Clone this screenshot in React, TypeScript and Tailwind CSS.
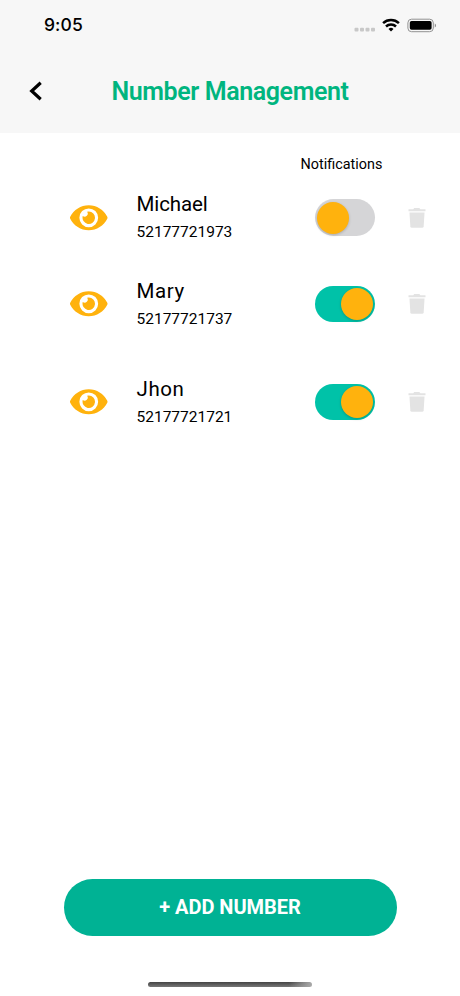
import { useState } from "react";
import { FaEye } from "react-icons/fa";

interface PhoneEntry {
    name: string;
    number: string;
    enabled: boolean;
    spacing: string;
    nameStyle: string;
}

const initialEntries: PhoneEntry[] = [
    { name: "Michael", number: "52177721973", enabled: false, spacing: "mt-[12.5px]", nameStyle: "tracking-[-0.1px]" },
    { name: "Mary", number: "52177721737", enabled: true, spacing: "mt-[26.5px]", nameStyle: "tracking-[0.6px]" },
    { name: "Jhon", number: "52177721721", enabled: true, spacing: "mt-[38px]", nameStyle: "tracking-[0.6px]" },
];

const StatusIcons = () => (
    <svg width="84" height="16" viewBox="0 0 84 16" aria-hidden="true">
        <g fill="#c8c8c8">
            <rect x="0.5" y="9.8" width="4" height="3.8" rx="1" />
            <rect x="6" y="9.8" width="4" height="3.8" rx="1" />
            <rect x="11.5" y="9.8" width="4" height="3.8" rx="1" />
            <rect x="17" y="9.8" width="4" height="3.8" rx="1" />
        </g>
        <g fill="none" stroke="#000" strokeWidth="2.5">
            <path d="M29.1 5.1a11.5 11.5 0 0 1 15.8 0" />
            <path d="M32 8.5a7.2 7.2 0 0 1 10 0" />
        </g>
        <path d="M37 13.6l-2.5-2.6a3.6 3.6 0 0 1 5 0z" fill="#000" />
        <rect x="53.9" y="1.2" width="25.4" height="12.5" rx="3.6" fill="none" stroke="#929292" />
        <rect x="55.8" y="3" width="21.8" height="8.8" rx="1.7" fill="#000" />
        <path d="M80.8 5.4c1.4.7 1.4 3.4 0 4.1z" fill="#777" />
    </svg>
);

const TrashIcon = () => (
    <svg width="18" height="20" viewBox="0 0 18 20" fill="#e3e3e3" aria-hidden="true">
        <path d="M0.5 1.2H5.3L6.2 0H11.4L12.3 1.2H17.5V3.2H0.5z" />
        <path d="M1.5 4.4H16.5L15.7 18.3Q15.6 19.8 14 19.8H4Q2.4 19.8 2.3 18.3z" />
    </svg>
);

const Toggle = ({ checked, onChange }: { checked: boolean; onChange: () => void }) => (
    <button
        type="button"
        role="switch"
        aria-checked={checked}
        aria-label="Notifications"
        onClick={onChange}
        className={`flex h-[36.5px] w-[60px] items-center rounded-full ${
            checked ? "justify-end bg-[#00c2a8] pr-[2px]" : "justify-start bg-[#d5d5d7] pl-[2px]"
        }`}
    >
        <span className="h-8 w-8 rounded-full bg-[#ffb20d] shadow-[0_1px_3px_rgba(0,0,0,0.2)]" />
    </button>
);

const App = () => {
    const [entries, setEntries] = useState(initialEntries);

    const toggleEntry = (index: number) => {
        setEntries(
            entries.map((entry, i) => (i === index ? { ...entry, enabled: !entry.enabled } : entry)),
        );
    };

    return (
        <div className="flex h-[996px] w-[460px] flex-col overflow-hidden bg-white font-['Roboto',sans-serif] text-black">
            <header className="h-[133px] shrink-0 bg-[#f7f7f7]">
                <div className="flex h-[51px] items-center justify-between pr-[22px] pl-[44px]">
                    <span className="font-['Inter',sans-serif] text-[17.5px] font-medium tracking-[0.1px]">
                        9:05
                    </span>
                    <StatusIcons />
                </div>
                <div className="grid h-[80px] grid-cols-[72px_1fr_72px] items-center">
                    <button type="button" aria-label="Back" className="pl-[29px]">
                        <svg width="14" height="20" viewBox="0 0 14 20" aria-hidden="true">
                            <path d="M11.7 1.8 2.7 10l9 8.2" fill="none" stroke="#000" strokeWidth="3.2" />
                        </svg>
                    </button>
                    <h1 className="pt-[2px] text-center text-[25px] leading-8 font-semibold tracking-[-0.4px] whitespace-nowrap text-[#00b57f]">
                        Number Management
                    </h1>
                </div>
            </header>

            <main className="flex-1 pt-[22px]">
                <p className="pl-[300.5px] text-[14.4px] leading-5">Notifications</p>
                {entries.map((entry, i) => (
                    <div
                        key={entry.number}
                        className={`flex h-[60px] items-center pl-[70px] ${entry.spacing}`}
                    >
                        <FaEye className="h-[33.5px] w-[37.5px] shrink-0 text-[#ffb20d]" />
                        <div className="ml-[29px] w-[178.5px] pt-[2px]">
                            <div className={`text-[20.5px] leading-[27px] ${entry.nameStyle}`}>{entry.name}</div>
                            <div className="text-[15.5px] leading-[28px]">{entry.number}</div>
                        </div>
                        <Toggle checked={entry.enabled} onChange={() => toggleEntry(i)} />
                        <button type="button" aria-label="Delete" className="ml-[32.5px]">
                            <TrashIcon />
                        </button>
                    </div>
                ))}
            </main>

            <footer className="flex flex-col items-center pb-[9px]">
                <button
                    type="button"
                    className="h-[57.5px] w-[333px] rounded-full bg-[#00b294] text-[20px] font-bold tracking-[-0.05px] text-white"
                >
                    + ADD NUMBER
                </button>
                <div className="mt-[45.5px] h-[5.5px] w-[164px] rounded-full bg-[linear-gradient(to_right,transparent_86%,#aaa),linear-gradient(#444,#777)]" />
            </footer>
        </div>
    );
};

export default App;
